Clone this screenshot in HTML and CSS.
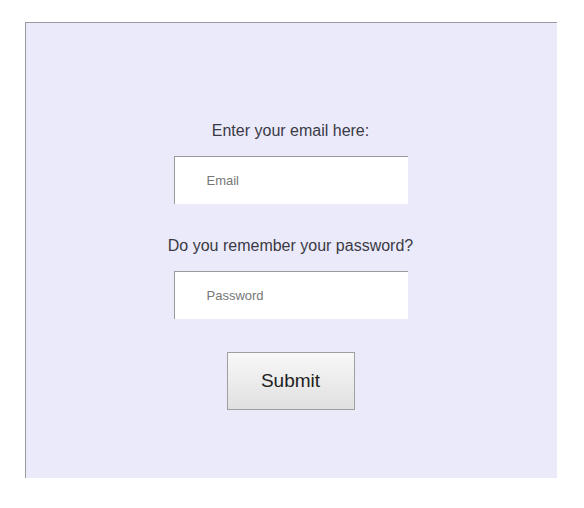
FILE: index.html
```html
<!DOCTYPE html>
<html>
<head>
<meta charset="utf-8">
<link rel="stylesheet" href="styles.css">
</head>
<body>
<form class="panel">
  <label class="label" for="email">Enter your email here:</label>
  <input class="field" id="email" type="email" placeholder="Email">
  <label class="label label-second" for="pw">Do you remember your password?</label>
  <input class="field" id="pw" type="password" placeholder="Password">
  <button class="submit" type="button">Submit</button>
</form>
</body>
</html>
```
FILE: styles.css
```css
html, body {
  margin: 0;
  padding: 0;
  background: #ffffff;
}
body {
  font-family: "Liberation Sans", Arial, sans-serif;
}
.panel {
  box-sizing: border-box;
  margin: 22px 0 0 25px;
  width: 532px;
  height: 456px;
  background: #ebeafb;
  border-top: 1px solid #9a9a9e;
  border-left: 1px solid #9a9a9e;
  display: flex;
  flex-direction: column;
  align-items: center;
  padding-top: 99px;
  padding-right: 2px;
}
.label {
  font-size: 16px;
  line-height: 18px;
  color: #3a3a44;
}
.label-second {
  margin-top: 33px;
}
.field {
  box-sizing: border-box;
  margin-top: 16px;
  width: 234px;
  height: 48px;
  border: none;
  border-top: 1px solid #9a9a9a;
  border-left: 1px solid #9a9a9a;
  background: #ffffff;
  padding: 0 0 0 32px;
  font-family: "Liberation Sans", Arial, sans-serif;
  font-size: 13px;
  color: #333;
  outline: none;
}
.field::placeholder {
  color: #777777;
}
.submit {
  box-sizing: border-box;
  margin-top: 33px;
  width: 128px;
  height: 58px;
  border: 1px solid #a0a0a0;
  background: linear-gradient(#f8f8f8, #e0e0e0);
  font-family: "Liberation Sans", Arial, sans-serif;
  font-size: 19px;
  color: #222;
  padding: 0;
}
```
